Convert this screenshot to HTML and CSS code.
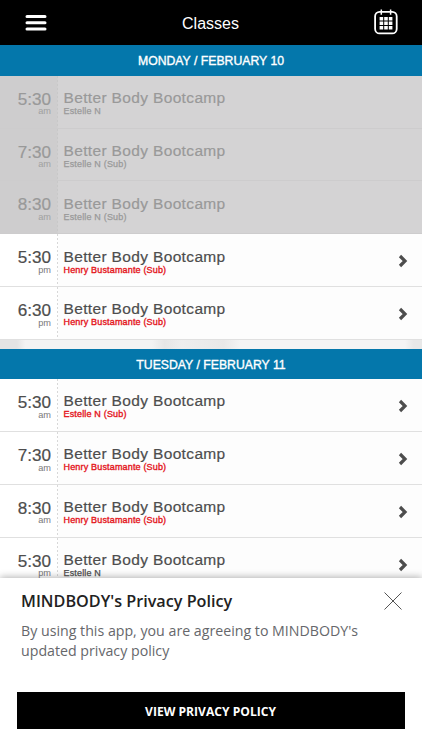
FILE: index.html
```html
<!DOCTYPE html>
<html lang="en">
<head>
  <meta charset="UTF-8" />
  <meta name="viewport" content="width=device-width, initial-scale=1.0">
  <title>Classes</title>
  <link rel="stylesheet" href="styles.css">
</head>
<body>
  <header class="topbar">
    <svg class="menu-icon" width="22" height="18" viewBox="0 0 22 18" stroke="#fff" stroke-width="3" stroke-linecap="round">
      <path d="M2 2.5h18M2 8.7h18M2 14.9h18" />
    </svg>
    <h1>Classes</h1>
    <svg class="calendar-icon" width="24" height="26" viewBox="0 0 24 26" fill="none" stroke="#fff">
      <rect x="1.1" y="2.8" width="21.6" height="21.6" rx="4.5" stroke-width="1.8" />
      <path d="M7.3 5.8V.6M16.6 5.8V.6" stroke-width="1.5" />
      <path d="M5.6 9.8h12.8M5.6 14.3h12.8M5.6 18.8h12.8" stroke-width="3.5" stroke-dasharray="3.6 1" />
    </svg>
  </header>

  <main class="schedule">
    <section class="day">
      <h2>MONDAY / FEBRUARY 10</h2>
      <div class="row past">
        <div class="time">5:30<span>am</span></div>
        <div class="info"><h3>Better Body Bootcamp</h3><p>Estelle N</p></div>
      </div>
      <div class="row past">
        <div class="time">7:30<span>am</span></div>
        <div class="info"><h3>Better Body Bootcamp</h3><p>Estelle N (Sub)</p></div>
      </div>
      <div class="row past">
        <div class="time">8:30<span>am</span></div>
        <div class="info"><h3>Better Body Bootcamp</h3><p>Estelle N (Sub)</p></div>
      </div>
      <div class="row">
        <div class="time">5:30<span>pm</span></div>
        <div class="info"><h3>Better Body Bootcamp</h3><p class="sub">Henry Bustamante (Sub)</p></div>
        <svg class="chevron" width="10" height="14" viewBox="0 0 10 14"><path d="M2 2l5 5-5 5" /></svg>
      </div>
      <div class="row">
        <div class="time">6:30<span>pm</span></div>
        <div class="info"><h3>Better Body Bootcamp</h3><p class="sub">Henry Bustamante (Sub)</p></div>
        <svg class="chevron" width="10" height="14" viewBox="0 0 10 14"><path d="M2 2l5 5-5 5" /></svg>
      </div>
    </section>

    <section class="day">
      <h2>TUESDAY / FEBRUARY 11</h2>
      <div class="row">
        <div class="time">5:30<span>am</span></div>
        <div class="info"><h3>Better Body Bootcamp</h3><p class="sub">Estelle N (Sub)</p></div>
        <svg class="chevron" width="10" height="14" viewBox="0 0 10 14"><path d="M2 2l5 5-5 5" /></svg>
      </div>
      <div class="row">
        <div class="time">7:30<span>am</span></div>
        <div class="info"><h3>Better Body Bootcamp</h3><p class="sub">Henry Bustamante (Sub)</p></div>
        <svg class="chevron" width="10" height="14" viewBox="0 0 10 14"><path d="M2 2l5 5-5 5" /></svg>
      </div>
      <div class="row">
        <div class="time">8:30<span>am</span></div>
        <div class="info"><h3>Better Body Bootcamp</h3><p class="sub">Henry Bustamante (Sub)</p></div>
        <svg class="chevron" width="10" height="14" viewBox="0 0 10 14"><path d="M2 2l5 5-5 5" /></svg>
      </div>
      <div class="row">
        <div class="time">5:30<span>pm</span></div>
        <div class="info"><h3>Better Body Bootcamp</h3><p>Estelle N</p></div>
        <svg class="chevron" width="10" height="14" viewBox="0 0 10 14"><path d="M2 2l5 5-5 5" /></svg>
      </div>
    </section>
  </main>

  <div class="policy">
    <div class="policy-head">
      <h4>MINDBODY's Privacy Policy</h4>
      <svg class="close" width="18" height="18" viewBox="0 0 18 18"><path d="M.5.5l17 17M17.5.5l-17 17" /></svg>
    </div>
    <p>By using this app, you are agreeing to MINDBODY's updated privacy policy</p>
    <button>VIEW PRIVACY POLICY</button>
  </div>
</body>
</html>
```

FILE: styles.css
```css
* {
  box-sizing: border-box;
}

body {
  margin: 0;
  height: 750px;
  overflow: hidden;
  font-family: "Liberation Sans", Arial, sans-serif;
  background: linear-gradient(to right, #e4e4e4 4%, #f3f3f3 6%, #f3f3f3 36%, #e6e6e6 39%, #eeeeee 43%, #e8e8e8 53%, #f4f4f4 57%, #f4f4f4 96%, #e8e8e8 98%);
}

h1, h2, h3, h4, p {
  margin: 0;
  font-weight: 400;
}

.topbar {
  display: flex;
  align-items: center;
  justify-content: space-between;
  height: 45px;
  padding: 0 24px 0 25px;
  background: #000;
  color: #fff;
}

.topbar h1 {
  font-size: 16px;
  padding-top: 2px;
}

.calendar-icon {
  margin-top: -2px;
}

.schedule {
  height: 533px;
  overflow: hidden;
}

.day {
  margin-bottom: 8.6px;
}

.day h2 {
  height: 30.7px;
  line-height: 32px;
  text-align: center;
  font-size: 12.25px;
  color: #fff;
  background: #0477ab;
  -webkit-text-stroke: 0.35px #fff;
}

.row {
  display: flex;
  height: 52.85px;
  border-bottom: 1.5px solid #e0e0e0;
  background: #fdfdfd;
  color: #4d4d4d;
}

.time {
  width: 57.5px;
  padding: 14px 6.5px 0 0;
  background: repeating-linear-gradient(#d8d8d8 0 2px, #fff 2px 4px) right / 1px 100% no-repeat #fff;
  text-align: right;
  font-size: 17.1px;
  line-height: 19px;
  -webkit-text-stroke: 0.2px currentColor;
}

.time span {
  display: block;
  font-size: 9.2px;
  line-height: 9px;
  margin-top: -1.5px;
  color: #777;
  -webkit-text-stroke: 0;
}

.info {
  flex: 1;
  padding: 13.3px 0 0 6px;
}

.info h3 {
  font-size: 15.5px;
  letter-spacing: 0.35px;
  line-height: 18px;
  -webkit-text-stroke: 0.2px currentColor;
}

.info p {
  font-size: 9px;
  letter-spacing: 0.17px;
  line-height: 9px;
  -webkit-text-stroke: 0.25px currentColor;
}

.info .sub {
  color: #e4141b;
  -webkit-text-stroke-width: 0.35px;
}

.past {
  background: #d4d3d4;
  border-color: #cdcccd;
  color: #999;
}

.past .time {
  background: repeating-linear-gradient(#c8c8c8 0 2px, #d0cfd0 2px 4px) right / 1px 100% no-repeat #cecdce;
}

.past .time span {
  color: #a0a0a0;
}

.chevron {
  align-self: center;
  margin: 2px 14px 0 0;
  fill: none;
  stroke: #4d4d4d;
  stroke-width: 3.2;
}

.policy {
  position: relative;
  height: 172px;
  padding: 12px 17px 0;
  background: #fff;
  box-shadow: 0 -1px 7px rgba(0, 0, 0, 0.3);
  font-family: "Open Sans", sans-serif;
}

.policy-head {
  display: flex;
  justify-content: space-between;
  padding: 0 3.5px 0 4px;
}

.policy h4 {
  font-size: 16.2px;
  line-height: 22px;
  font-weight: 600;
  color: #222;
}

.close {
  margin-top: 2px;
  fill: none;
  stroke: #555;
  stroke-width: 1;
}

.policy p {
  margin: 9px 0 32px;
  padding: 0 4px;
  font-size: 14.2px;
  line-height: 19.5px;
  color: #66676b;
}

.policy button {
  display: block;
  width: 100%;
  height: 37px;
  padding: 1px 5px 0 4px;
  border: none;
  background: #000;
  color: #fff;
  font-family: inherit;
  font-size: 12.1px;
  font-weight: 700;
}
```
